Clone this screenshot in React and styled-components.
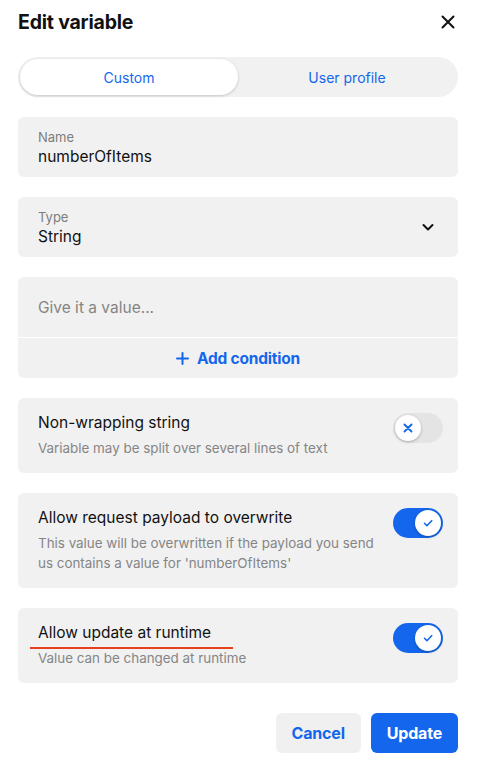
import React from "react";
import styled, { createGlobalStyle } from "styled-components";

const GlobalStyle = createGlobalStyle`
  body {
    margin: 0;
    background: #fff;
    font-family: Inter, "Noto Sans", "Liberation Sans", sans-serif;
    color: #111;
  }
`;

const BLUE = "#1467ec";

const Panel = styled.div`
  width: 477px;
  padding: 0 19px 0 18px;
  box-sizing: border-box;
  display: flex;
  flex-direction: column;
`;

const Header = styled.div`
  height: 44px;
  display: flex;
  align-items: center;
  justify-content: space-between;
  padding-right: 2px;
`;

const Title = styled.h1`
  margin: 0;
  font-size: 19.5px;
  font-weight: 700;
  letter-spacing: -0.2px;
`;

const CloseButton = styled.button`
  border: 0;
  background: none;
  padding: 0;
  display: flex;
  cursor: pointer;
`;

const Tabs = styled.div`
  margin-top: 13px;
  height: 40px;
  background: #f1f1f1;
  border-radius: 20px;
  padding: 2px;
  box-sizing: border-box;
  display: grid;
  grid-template-columns: 218px 1fr;
`;

const Tab = styled.button`
  border: 0;
  border-radius: 18px;
  font: inherit;
  font-size: 14px;
  color: ${BLUE};
  background: ${(p) => (p.active ? "#fff" : "transparent")};
  box-shadow: ${(p) => (p.active ? "0 1px 3px rgba(0,0,0,0.18)" : "none")};
  cursor: pointer;
`;

const Card = styled.div`
  background: #f1f1f1;
  border-radius: 6px;
  margin-top: 20px;
  overflow: hidden;
`;

const FieldCard = styled(Card)`
  height: 60px;
  box-sizing: border-box;
  padding: 10px 20px 0;
  display: flex;
  align-items: center;
  justify-content: space-between;
`;

const FieldLabel = styled.div`
  font-size: 13px;
  line-height: 20px;
  color: #7d7d7d;
  margin-top: -1px;
`;

const FieldValue = styled.div`
  font-size: 15.5px;
  line-height: 20px;
  color: #111;
`;

const FieldText = styled.div`
  margin-top: -10px;
`;

const Chevron = styled.div`
  display: flex;
  margin-right: 3px;
  margin-top: -10px;
`;

const ValueInput = styled.div`
  height: 60px;
  padding: 0 20px;
  display: flex;
  align-items: center;
  font-size: 15.5px;
  color: #858585;
  border-bottom: 1px solid #fff;
`;

const AddCondition = styled.button`
  width: 100%;
  height: 40px;
  border: 0;
  background: none;
  display: flex;
  align-items: center;
  justify-content: center;
  gap: 8px;
  font: inherit;
  font-size: 15.5px;
  font-weight: 700;
  color: ${BLUE};
  letter-spacing: -0.2px;
  cursor: pointer;
`;

const OptionCard = styled(Card)`
  padding: 13px 15px 15px 20px;
  display: flex;
  align-items: flex-start;
  justify-content: space-between;
  gap: 15px;
`;

const OptionText = styled.div`
  flex: 1;
`;

const OptionTitle = styled.div`
  font-size: 15.5px;
  line-height: 24px;
  color: #111;
  position: relative;
  display: inline-block;
`;

const Underline = styled.span`
  position: absolute;
  left: -8px;
  right: -22px;
  bottom: -4px;
  height: 2px;
  background: #e8401c;
`;

const OptionDesc = styled.div`
  margin-top: 3px;
  font-size: 13.4px;
  line-height: 20px;
  color: #858585;
`;

const Toggle = styled.div`
  width: 50px;
  height: 30px;
  margin-top: 2px;
  border-radius: 15px;
  flex-shrink: 0;
  background: ${(p) => (p.on ? BLUE : "#e4e4e4")};
  padding: 2px;
  box-sizing: border-box;
  display: flex;
  justify-content: ${(p) => (p.on ? "flex-end" : "flex-start")};
`;

const Knob = styled.div`
  width: 26px;
  height: 26px;
  border-radius: 50%;
  background: #fff;
  box-shadow: 0 1px 3px rgba(0, 0, 0, 0.25);
  display: flex;
  align-items: center;
  justify-content: center;
`;

const Footer = styled.div`
  margin-top: 30px;
  display: flex;
  justify-content: flex-end;
  gap: 10px;
`;

const Button = styled.button`
  height: 40px;
  border: 0;
  border-radius: 6px;
  padding: 0 16px;
  font: inherit;
  font-size: 16px;
  font-weight: 700;
  letter-spacing: -0.2px;
  color: ${(p) => (p.primary ? "#fff" : BLUE)};
  background: ${(p) => (p.primary ? BLUE : "#f0f0f0")};
  cursor: pointer;
`;

const Check = () => (
  <svg width="12" height="12" viewBox="0 0 12 12" fill="none">
    <path d="M2.5 6.3l2.4 2.4 4.8-5" stroke={BLUE} strokeWidth="1.6" strokeLinecap="round" strokeLinejoin="round" />
  </svg>
);

const Cross = () => (
  <svg width="12" height="12" viewBox="0 0 12 12" fill="none">
    <path d="M2.5 2.5l7 7M9.5 2.5l-7 7" stroke={BLUE} strokeWidth="1.9" strokeLinecap="round" />
  </svg>
);

const Switch = ({ on }) => (
  <Toggle on={on ? 1 : 0}>
    <Knob>{on ? <Check /> : <Cross />}</Knob>
  </Toggle>
);

const Option = ({ title, desc, on, marked }) => (
  <OptionCard>
    <OptionText>
      <OptionTitle>
        {title}
        {marked && <Underline />}
      </OptionTitle>
      <OptionDesc>{desc}</OptionDesc>
    </OptionText>
    <Switch on={on} />
  </OptionCard>
);

export default function App() {
  return (
    <>
      <GlobalStyle />
      <Panel>
        <Header>
          <Title>Edit variable</Title>
          <CloseButton aria-label="Close">
            <svg width="16" height="16" viewBox="0 0 16 16" fill="none">
              <path d="M2.5 2.5l11 11M13.5 2.5l-11 11" stroke="#111" strokeWidth="2" strokeLinecap="round" />
            </svg>
          </CloseButton>
        </Header>

        <Tabs>
          <Tab active>Custom</Tab>
          <Tab>User profile</Tab>
        </Tabs>

        <FieldCard>
          <FieldText>
            <FieldLabel>Name</FieldLabel>
            <FieldValue>numberOfItems</FieldValue>
          </FieldText>
        </FieldCard>

        <FieldCard>
          <FieldText>
            <FieldLabel>Type</FieldLabel>
            <FieldValue>String</FieldValue>
          </FieldText>
          <Chevron>
            <svg width="14" height="14" viewBox="0 0 14 14" fill="none">
              <path d="M2.5 5l4.5 4.5L11.5 5" stroke="#111" strokeWidth="2" strokeLinecap="round" strokeLinejoin="round" />
            </svg>
          </Chevron>
        </FieldCard>

        <Card>
          <ValueInput>Give it a value...</ValueInput>
          <AddCondition>
            <svg width="13" height="13" viewBox="0 0 13 13" fill="none">
              <path d="M6.5 1v11M1 6.5h11" stroke={BLUE} strokeWidth="2" strokeLinecap="round" />
            </svg>
            Add condition
          </AddCondition>
        </Card>

        <Option title="Non-wrapping string" desc="Variable may be split over several lines of text" />
        <Option
          title="Allow request payload to overwrite"
          desc="This value will be overwritten if the payload you send us contains a value for 'numberOfItems'"
          on
        />
        <Option title="Allow update at runtime" desc="Value can be changed at runtime" on marked />

        <Footer>
          <Button>Cancel</Button>
          <Button primary>Update</Button>
        </Footer>
      </Panel>
    </>
  );
}
